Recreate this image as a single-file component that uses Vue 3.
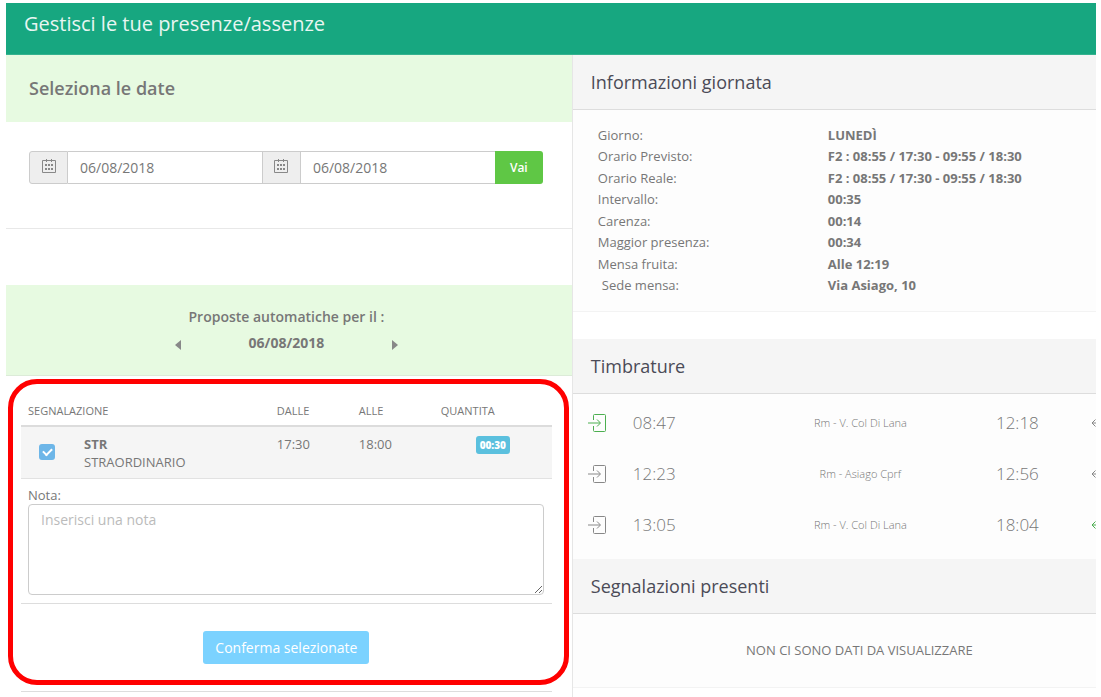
<script setup>
import { ref } from 'vue'

const from = ref('06/08/2018')
const to = ref('06/08/2018')
const selected = ref(true)
const note = ref('')

const info = [
  { label: 'Giorno:', value: 'LUNEDÌ' },
  { label: 'Orario Previsto:', value: 'F2 : 08:55 / 17:30 - 09:55 / 18:30' },
  { label: 'Orario Reale:', value: 'F2 : 08:55 / 17:30 - 09:55 / 18:30' },
  { label: 'Intervallo:', value: '00:35' },
  { label: 'Carenza:', value: '00:14' },
  { label: 'Maggior presenza:', value: '00:34' },
  { label: 'Mensa fruita:', value: 'Alle 12:19' },
  { label: 'Sede mensa:', value: 'Via Asiago, 10', nested: true }
]

const stamps = [
  { start: '08:47', place: 'Rm - V. Col Di Lana', end: '12:18', first: true },
  { start: '12:23', place: 'Rm - Asiago Cprf', end: '12:56' },
  { start: '13:05', place: 'Rm - V. Col Di Lana', end: '18:04', last: true }
]
</script>

<template>
  <div class="page">
    <header class="topbar"><h1>Gestisci le tue presenze/assenze</h1></header>
    <div class="columns">
      <main class="left">
        <h2 class="band">Seleziona le date</h2>
        <form class="dates" @submit.prevent>
          <div class="group">
            <label class="addon" for="from" aria-label="Dal">
              <svg width="14" height="14" viewBox="0 0 14 14"><path d="M.5 1.500h13v12H.5zM4.500 0v3M9.500 0v3" /><path class="dots" d="M3 6h8M3 10h8" /></svg>
            </label>
            <input id="from" v-model="from" type="text">
            <label class="addon" for="to" aria-label="Al">
              <svg width="14" height="14" viewBox="0 0 14 14"><path d="M.5 1.500h13v12H.5zM4.500 0v3M9.500 0v3" /><path class="dots" d="M3 6h8M3 10h8" /></svg>
            </label>
            <input id="to" v-model="to" type="text">
            <button class="go" type="submit">Vai</button>
          </div>
        </form>
        <section class="proposals">
          <h3>Proposte automatiche per il :</h3>
          <div class="pager">
            <button type="button" aria-label="Giorno precedente"><svg width="6" height="10" viewBox="0 0 6 10"><path d="M6 0v10L0 5z" /></svg></button>
            <strong>06/08/2018</strong>
            <button type="button" aria-label="Giorno successivo"><svg width="6" height="10" viewBox="0 0 6 10"><path d="M0 0v10l6-5z" /></svg></button>
          </div>
        </section>
        <section class="highlight">
          <table>
            <colgroup><col class="c-check"><col><col class="c-time"><col class="c-time"><col class="c-qty"></colgroup>
            <thead>
              <tr><th colspan="2">SEGNALAZIONE</th><th>DALLE</th><th>ALLE</th><th>QUANTITA</th></tr>
            </thead>
            <tbody>
              <tr>
                <td class="check"><input v-model="selected" type="checkbox" aria-label="Seleziona STR"></td>
                <td><strong>STR</strong><br>STRAORDINARIO</td>
                <td>17:30</td>
                <td>18:00</td>
                <td class="qty"><span class="badge">00:30</span></td>
              </tr>
            </tbody>
          </table>
          <div class="note">
            <label for="note">Nota:</label>
            <textarea id="note" v-model="note" placeholder="Inserisci una nota"></textarea>
          </div>
          <div class="actions"><button class="confirm" type="button">Conferma selezionate</button></div>
        </section>
        <hr>
      </main>
      <aside class="right">
        <h2>Informazioni giornata</h2>
        <dl class="info">
          <div v-for="row in info" :key="row.label">
            <dt :class="{ nested: row.nested }">{{ row.label }}</dt>
            <dd>{{ row.value }}</dd>
          </div>
        </dl>
        <h2>Timbrature</h2>
        <ul class="stamps">
          <li v-for="s in stamps" :key="s.start">
            <svg class="door" :class="{ green: s.first }" width="18" height="18" viewBox="0 0 18 18"><path d="M5.500 6V1.500q0-1 1-1h10q1 0 1 1v15q0 1-1 1h-10q-1 0-1-1V12M0 9h12M9 5.500 12.500 9 9 12.500" /></svg>
            <span class="time">{{ s.start }}</span>
            <span class="place">{{ s.place }}</span>
            <span class="time end">{{ s.end }}</span>
            <svg class="door" :class="{ green: s.last }" width="18" height="18" viewBox="0 0 18 18"><path d="M17.500 6V1.500q0-1-1-1h-9q-1 0-1 1V6M17.500 12v4.500q0 1-1 1h-9q-1 0-1-1V12M13 9H1M4.500 5.500 1 9l3.500 3.500" /></svg>
          </li>
        </ul>
        <h2>Segnalazioni presenti</h2>
        <p class="empty">NON CI SONO DATI DA VISUALIZZARE</p>
      </aside>
    </div>
  </div>
</template>

<style>
body { margin: 0; background: #fff; }
</style>

<style scoped>
* { box-sizing: border-box; }
.page {
  display: flex;
  flex-direction: column;
  min-height: 100vh;
  padding: 3px 5px 0 6px;
  font-family: "Open Sans", "Noto Sans", sans-serif;
  font-size: 13px;
  color: #777;
}
h1, h2, h3, p, dl, dd, ul { margin: 0; padding: 0; }
button, input, textarea { font-family: inherit; color: inherit; }
button { cursor: pointer; border: 0; }
.topbar {
  height: 52px;
  padding: 0 18px;
  background: #17a780;
  border-bottom: 1px solid #35b28f;
}
h1 { font-size: 20px; line-height: 42px; font-weight: 400; color: #e8f6f2; }
.columns { flex: 1; display: grid; grid-template-columns: minmax(0, 52fr) minmax(0, 48fr); }
.left { border-right: 1px solid #e6e6e6; }
.band {
  padding: 0 23px;
  font-size: 18px;
  line-height: 67px;
  font-weight: 600;
  background: #e7fae1;
}
.dates { padding: 29px 29px 44px 23px; border-bottom: 1px solid #e8e8e8; }
.group { display: flex; height: 33px; }
.addon {
  display: flex;
  flex: none;
  justify-content: center;
  width: 39px;
  padding-top: 7px;
  border: 1px solid #ccc;
  background: #eee;
}
.addon:first-child { border-radius: 3px 0 0 3px; }
.addon svg { fill: none; stroke: #888; }
.addon .dots { stroke-width: 2; stroke-dasharray: 2 1; }
.group input {
  flex: 1;
  min-width: 0;
  padding: 0 12px;
  border: 1px solid #ccc;
  border-width: 1px 0;
  background: #fff;
  font-size: 14px;
  outline: 0;
}
.group .go {
  flex: none;
  width: 48px;
  border-radius: 0 3px 3px 0;
  background: #5fc745;
  color: #fff;
  font-size: 12px;
  font-weight: 600;
}
.proposals {
  height: 91px;
  margin-top: 56px;
  padding: 21px 5px 0 0;
  text-align: center;
  background: #e7fae1;
  border-bottom: 1px solid #dcebd8;
}
.proposals h3 { font-size: 14px; line-height: 22px; font-weight: 600; }
.pager { display: flex; justify-content: center; gap: 68px; font-size: 14px; line-height: 30px; }
.pager button { display: flex; align-items: center; padding: 4px 0 0; background: none; }
.pager svg { fill: #888; }
.highlight {
  height: 306px;
  margin: 3px 3px 0 2px;
  padding: 14px 12px 0 8px;
  border: 5px solid #f00;
  border-radius: 29px;
}
table { width: 100%; table-layout: fixed; border-collapse: collapse; line-height: 18px; }
.c-check { width: 56px; }
.c-time { width: 82px; }
.c-qty { width: 118px; }
th { padding: 4px 7px 5px; font-size: 11px; font-weight: 400; text-align: left; }
thead tr { border-bottom: 2px solid #dcdcdc; }
td { padding: 8px 7px 7px; vertical-align: top; }
tbody tr { background: #f5f5f5; border-bottom: 1px solid #e2e2e2; }
td.check { padding: 17px 18px 0; line-height: 0; }
.check input {
  appearance: none;
  display: grid;
  place-items: center;
  width: 16px;
  height: 16px;
  margin: 0;
  border-radius: 3px;
  background: #6db6e8;
}
.check input:checked::after {
  content: "";
  width: 7px;
  height: 4px;
  margin-bottom: 2px;
  border: solid #fff;
  border-width: 0 0 2px 2px;
  rotate: -45deg;
}
td.qty { text-align: center; }
.badge {
  display: inline-block;
  padding: 0 4px;
  border-radius: 3px;
  background: #5bc0de;
  color: #fff;
  font-size: 10px;
  font-weight: 800;
}
.note { padding: 7px 8px 8px 7px; border-bottom: 1px solid #ddd; }
.note label { display: block; line-height: 18px; }
.note textarea {
  display: block;
  width: 100%;
  height: 91px;
  padding: 5px 12px;
  border: 1px solid #ccc;
  border-radius: 4px;
  background: #fff;
  font-size: 14px;
  line-height: 20px;
  outline: 0;
}
.note textarea::placeholder { color: #bbb; }
.actions { padding-top: 27px; text-align: center; }
.confirm {
  height: 33px;
  padding: 0 12px;
  border-radius: 3px;
  background: #7bd2ff;
  color: #fff;
  font-size: 14px;
  font-weight: 500;
}
hr { margin: 6px 20px 0 15px; border: 0; border-top: 1px solid #ddd; }
.right { min-width: 0; overflow: hidden; }
.right h2 {
  height: 55px;
  padding: 0 18px;
  font-size: 18px;
  line-height: 54px;
  font-weight: 400;
  color: #4b4b57;
  background: #f5f5f5;
  border-bottom: 1px solid #ddd;
}
.info {
  display: flex;
  flex-direction: column;
  justify-content: space-between;
  height: 202px;
  margin-bottom: 27px;
  padding: 15px 23px 15px 25px;
  background: #fdfdfd;
  border-bottom: 1px solid #f3f3f3;
  line-height: 21px;
}
.info div { display: flex; }
.info dt { flex: 0 0 230px; }
.info dt.nested { padding-left: 4px; }
.info dd { font-weight: 700; }
.stamps { padding: 3px 0 9px; list-style: none; background: #fdfdfd; }
.stamps li {
  display: grid;
  grid-template-columns: 45px 110fr 235fr 113fr 5px;
  align-items: center;
  height: 51px;
  padding-left: 15px;
}
.door { fill: none; stroke: #888; }
.door.green { stroke: #4caf50; }
.time { font-size: 17px; font-weight: 300; }
.time.end { padding-left: 18px; }
.place { font-size: 11px; font-weight: 300; text-align: center; }
.empty {
  height: 74px;
  padding-left: 50px;
  line-height: 73px;
  font-size: 13px;
  text-align: center;
  background: #fdfdfd;
  border-bottom: 1px solid #f3f3f3;
}
</style>
